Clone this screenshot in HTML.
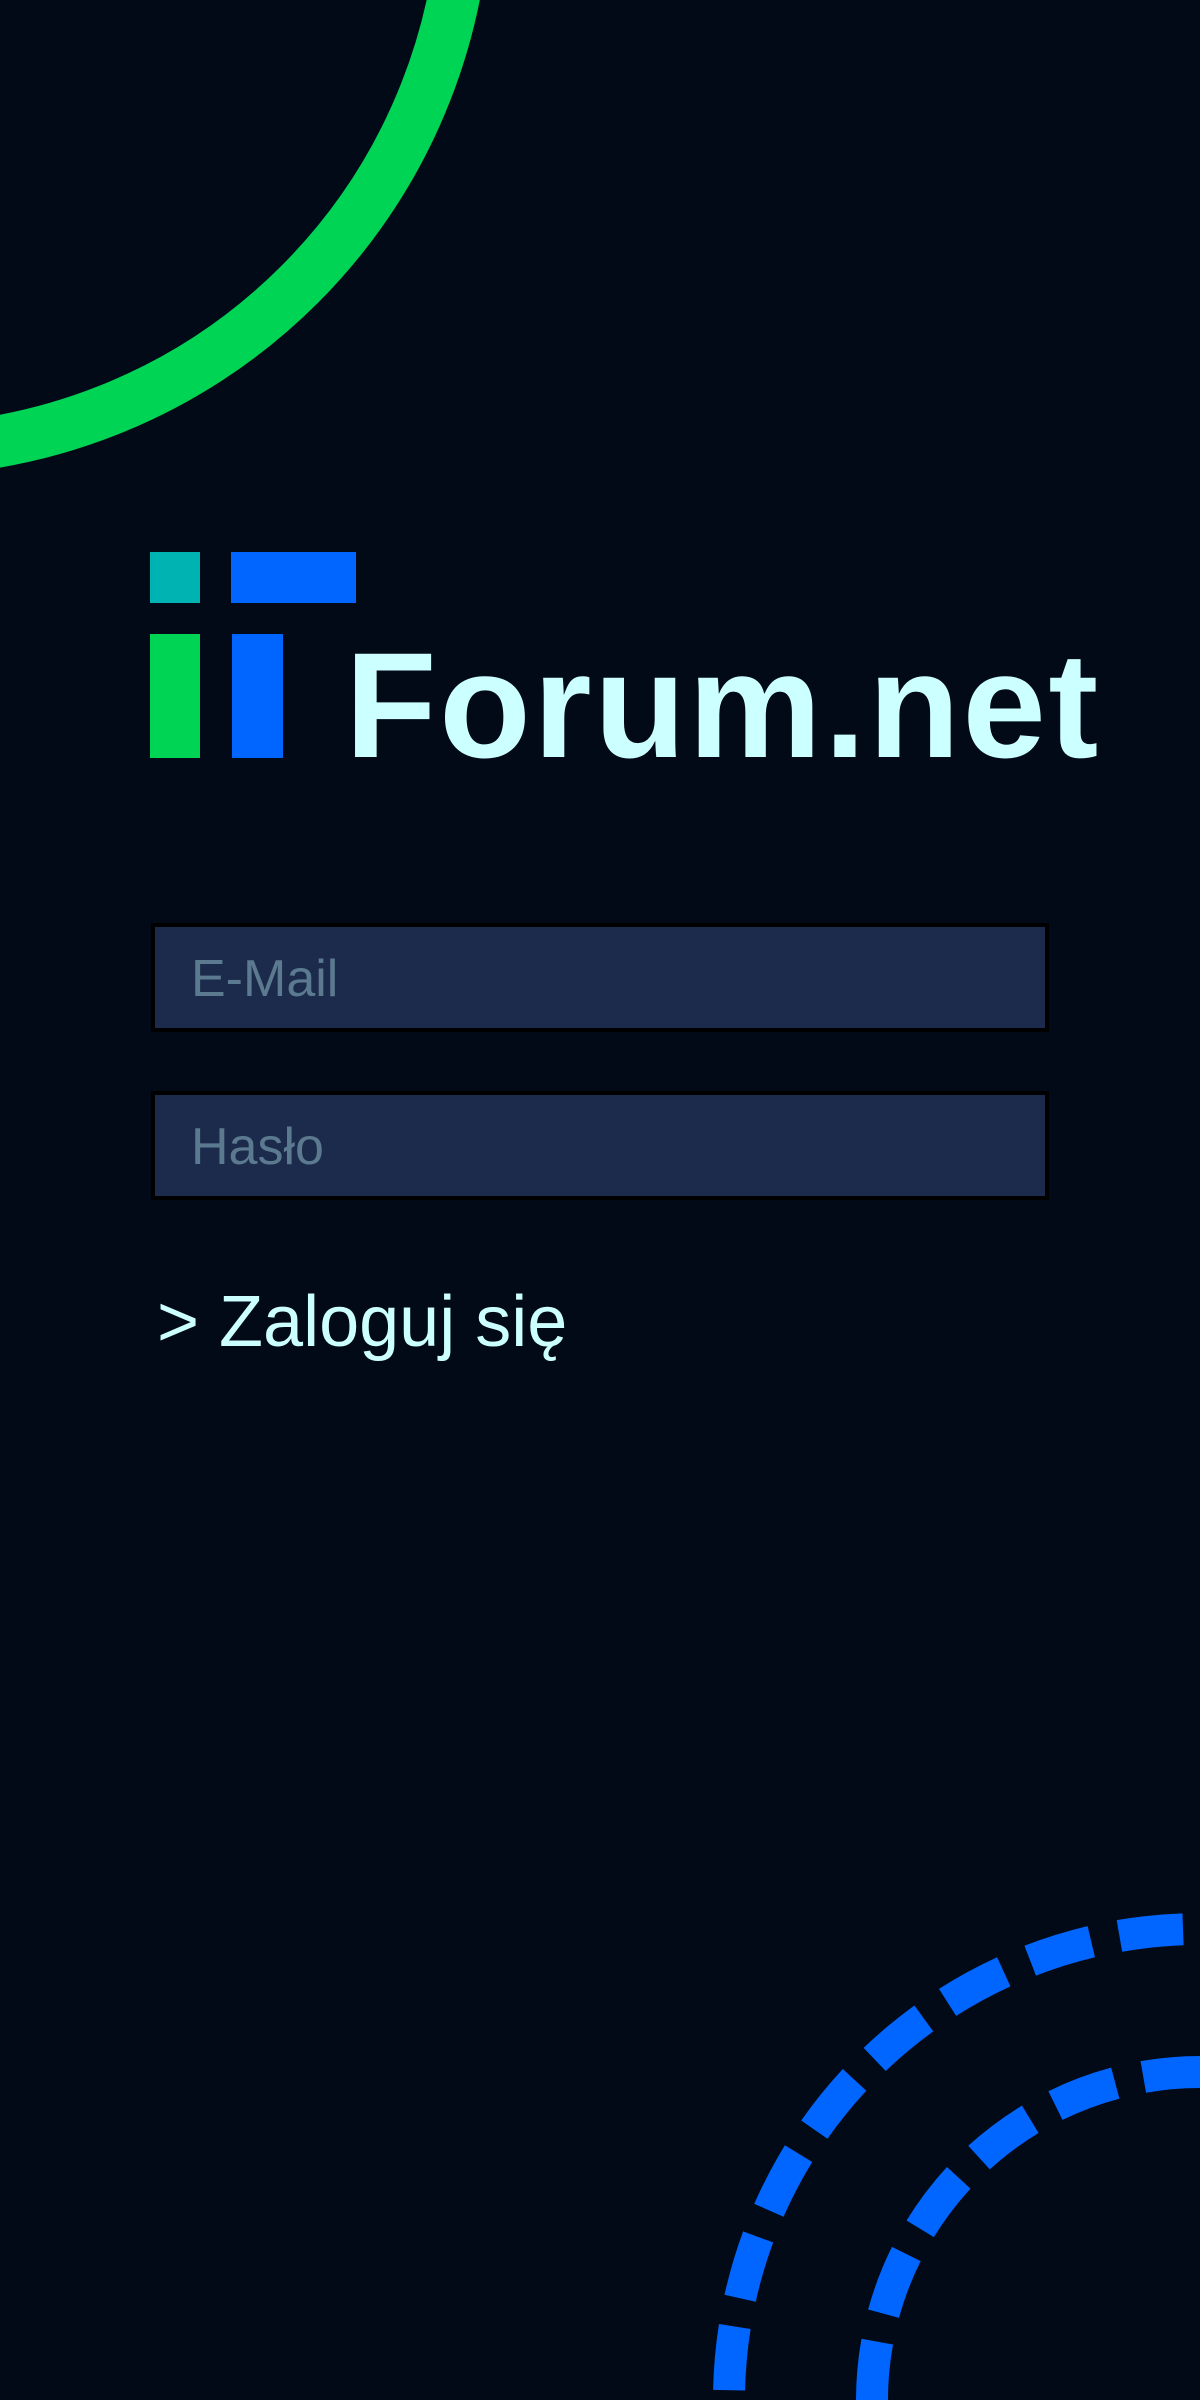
<!DOCTYPE html>
<html><head><meta charset="utf-8"><style>
html,body{margin:0;padding:0;}
body{width:1200px;height:2400px;background:#020a18;position:relative;overflow:hidden;font-family:"Liberation Sans",sans-serif;}
.a{position:absolute;}
.inp{position:absolute;left:151px;width:890px;height:101px;background:#1c2b4b;border:4px solid #000;}
.ph{position:absolute;left:36px;font-size:52px;line-height:1;color:#5b7a90;white-space:nowrap;}
</style></head><body>
<svg class="a" style="left:0;top:0" width="1200" height="2400" viewBox="0 0 1200 2400">
  <circle cx="-100" cy="-115" r="565" fill="none" stroke="#00d455" stroke-width="52"/>
  <path d="M1200 1929 A471 471 0 0 0 729 2400" fill="none" stroke="#0066ff" stroke-width="32" stroke-dasharray="64 28.7" stroke-dashoffset="-17"/>
  <path d="M1200 2072 A328 328 0 0 0 872 2400" fill="none" stroke="#0066ff" stroke-width="32" stroke-dasharray="64 28.7" stroke-dashoffset="7"/>
  <rect x="150" y="552" width="50" height="51" fill="#00b3b3"/>
  <rect x="231" y="552" width="125" height="51" fill="#0066ff"/>
  <rect x="150" y="634" width="50" height="124" fill="#00d455"/>
  <rect x="232" y="634" width="51" height="124" fill="#0066ff"/>
</svg>
<div class="a" style="left:345px;top:630px;font-size:150px;line-height:1;font-weight:bold;letter-spacing:2.5px;color:#ccffff;white-space:nowrap;">Forum.net</div>
<div class="inp" style="top:923px;"><div class="ph" style="top:26px;">E-Mail</div></div>
<div class="inp" style="top:1091px;"><div class="ph" style="top:26px;">Hasło</div></div>
<div class="a" style="left:157px;top:1286px;font-size:72px;line-height:1;color:#ccffff;white-space:nowrap;">&gt; Zaloguj się</div>
</body></html>
